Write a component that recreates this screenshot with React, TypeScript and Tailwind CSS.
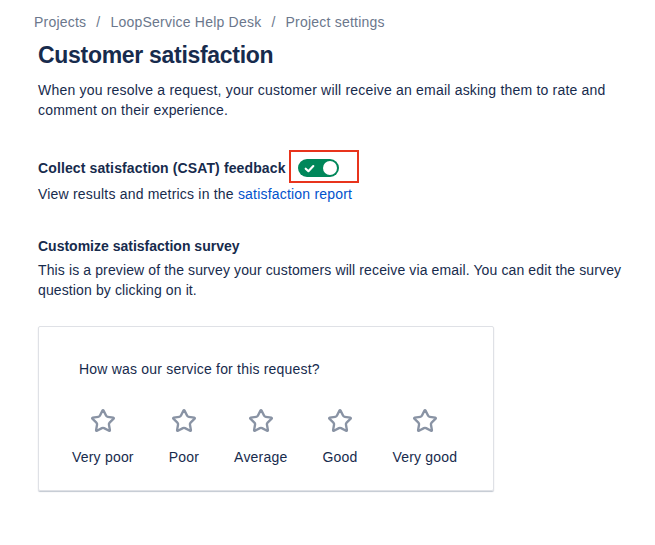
import React from "react";
import { Star } from "lucide-react";

const ratings = ["Very poor", "Poor", "Average", "Good", "Very good"];

export default function App() {
  return (
    <div
      className="min-h-[545px] w-[655px] bg-white text-[#172B4D] text-[14px] leading-[20px] tracking-[0.12px]"
      style={{ fontFamily: '"Liberation Sans", Arial, sans-serif' }}
    >
      <div className="pl-[34px] text-[#6B778C] flex items-center h-[32px] pt-[12px] tracking-[0.22px]">
        <span>Projects</span>
        <span className="px-[10px]">/</span>
        <span>LoopService Help Desk</span>
        <span className="px-[10px]">/</span>
        <span>Project settings</span>
      </div>
      <div className="pl-[38px] pr-[20px]">
        <h1 className="mt-[9px] text-[23px] leading-[28px] font-bold tracking-[-0.3px]">
          Customer satisfaction
        </h1>
        <p className="mt-[11px] pr-[20px] tracking-[0.2px]">
          When you resolve a request, your customer will receive an email asking them to rate and comment on their experience.
        </p>

        <div className="mt-[38px] flex items-center h-[20px]">
          <span className="font-bold tracking-[0.12px]">Collect satisfaction (CSAT) feedback</span>
          <div className="relative ml-[12px]">
            <div className="absolute -left-[9px] -top-[9px] w-[70px] h-[33px] border-2 border-[#E8341C]" />
            <div className="w-[41px] h-[18px] rounded-full bg-[#00875A] flex items-center justify-between pl-[5px] pr-[2px]">
              <svg width="13" height="13" viewBox="0 0 12 12" fill="none">
                <path d="M2.5 6.2 L5 8.5 L9.5 3.8" stroke="white" strokeWidth="2" strokeLinecap="round" strokeLinejoin="round" />
              </svg>
              <div className="w-[14px] h-[14px] rounded-full bg-white" />
            </div>
          </div>
        </div>
        <p className="mt-[6px] tracking-[0.2px]">
          View results and metrics in the <span className="text-[#0052CC]">satisfaction report</span>
        </p>

        <h2 className="mt-[32px] font-bold tracking-[0px]">Customize satisfaction survey</h2>
        <p className="mt-[4px]">
          This is a preview of the survey your customers will receive via email. You can edit the survey question by clicking on it.
        </p>

        <div className="mt-[26px] w-[456px] h-[165px] border border-[#DFE1E6] rounded-[2px] shadow-[0_1px_1px_rgba(9,30,66,0.25)] pt-[32px]">
          <p className="pl-[40px] tracking-[0.2px]">How was our service for this request?</p>
          <div className="mt-[29px] pl-[33px] flex gap-[35px] tracking-[0.2px]">
            {ratings.map((r) => (
              <div key={r} className="flex flex-col items-center">
                <Star size={26} strokeWidth={2.2} color="#8993A4" />
                <span className="mt-[13px]">{r}</span>
              </div>
            ))}
          </div>
        </div>
      </div>
    </div>
  );
}
